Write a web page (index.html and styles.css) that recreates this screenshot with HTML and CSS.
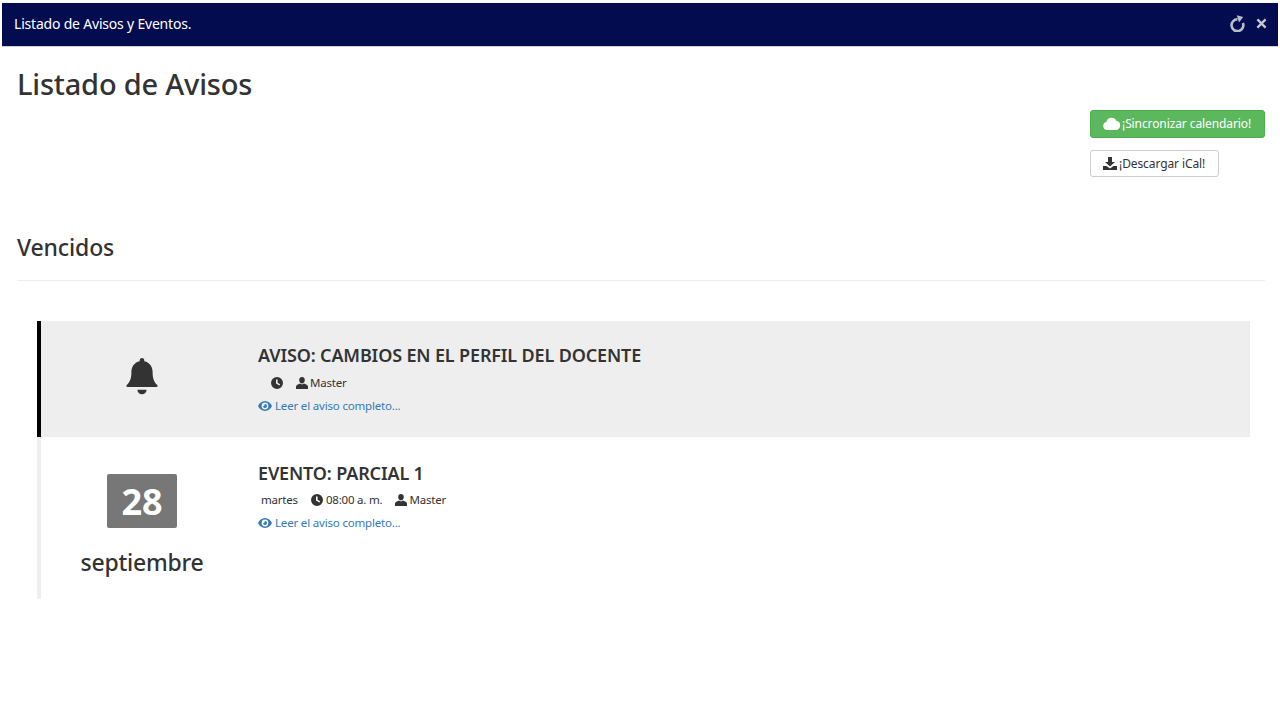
FILE: index.html
```html
<!DOCTYPE html>
<html lang="es">
<head>
<meta charset="utf-8">
<title>Listado de Avisos y Eventos.</title>
<link rel="stylesheet" href="styles.css">
</head>
<body>
<header class="bar">
  <span class="bar-title">Listado de Avisos y Eventos.</span>
  <span class="bar-tools">
    <svg class="tool-refresh" viewBox="0 0 15 17"><path class="refresh-arc" d="M7.500 4.300A5.900 5.900 0 1 0 12.900 8"/><path class="refresh-head" d="M6.800.2l6.400 1.800L9 7.600z"/></svg>
    <svg class="tool-close" viewBox="0 0 12 12"><path d="M2.400.6 6 4.200 9.600.6l1.800 1.800L7.800 6l3.600 3.600-1.800 1.800L6 7.800l-3.600 3.600-1.800-1.800L4.200 6 .6 2.400z"/></svg>
  </span>
</header>
<main class="page">
  <h1 class="page-title">Listado de Avisos</h1>
  <div class="actions">
    <a class="btn btn-green">
      <svg class="ico-cloud" viewBox="0 0 18 13"><path d="M4 13a4 4 0 0 1-.6-7.900A5.200 5.200 0 0 1 13.300 3.800 4.700 4.700 0 0 1 13.500 13z"/></svg>¡Sincronizar calendario!
    </a>
    <a class="btn btn-white">
      <svg class="ico-dl" viewBox="0 0 14 13"><path d="M5 0h4v5h3L7 9.500 2 5h3zM0 9h3.500L7 11.500 10.500 9H14v4H0z"/></svg>¡Descargar iCal!
    </a>
  </div>
  <h2 class="section-title">Vencidos</h2>
  <hr class="rule">
  <ul class="feed">
    <li class="item item-active">
      <div class="item-side">
        <svg class="ico-bell" viewBox="0 0 32 36.500"><path d="M16 0c1.400 0 2.300 1 2.300 2.400v.8C24 4.400 26.600 9 26.600 14c0 6 1.200 9.800 4.600 13 .8.800.5 2-.7 2H1.500c-1.200 0-1.500-1.200-.7-2C4.200 23.800 5.400 20 5.400 14 5.400 9 8 4.400 13.700 3.200v-.8C13.700 1 14.600 0 16 0zM11.400 31.700h9.200a4.600 4.600 0 0 1-9.200 0z"/></svg>
      </div>
      <div class="item-body">
        <h3 class="item-title">AVISO: CAMBIOS EN EL PERFIL DEL DOCENTE</h3>
        <p class="meta meta-indent">
          <span class="meta-part"><svg class="ico" viewBox="0 0 12 12"><path d="M6 0a6 6 0 1 1 0 12A6 6 0 0 1 6 0zM5 2.500v4.100l3.400 1.900.8-1.300L6.600 5.700V2.500z"/></svg></span>
          <span class="meta-part"><svg class="ico ico-user" viewBox="0 0 12 12"><path d="M6 0c1.700 0 2.800 1.300 2.800 3.100S7.700 6.500 6 6.500 3.200 4.900 3.200 3.100 4.300 0 6 0zM0 12V9.800c0-1.300 1-2 2.300-2.500L4 6.600c.6.500 1.200.8 2 .8s1.400-.3 2-.8l1.700.7c1.300.5 2.300 1.200 2.300 2.500V12z"/></svg>Master</span>
        </p>
        <a class="more"><svg class="ico-eye" viewBox="0 0 14 10"><path d="M7 0c3.200 0 5.700 2.200 7 5-1.300 2.800-3.800 5-7 5S1.300 7.800 0 5c1.300-2.800 3.800-5 7-5zm0 1.600a3.400 3.400 0 1 0 0 6.800 3.400 3.400 0 0 0 0-6.800zM7 3a2 2 0 1 1-2 2c.6.400 1.500 0 1.500-.7C6.500 3.800 6.500 3.300 7 3z" fill-rule="evenodd"/></svg>Leer el aviso completo...</a>
      </div>
    </li>
    <li class="item">
      <div class="item-side">
        <div class="day">28</div>
        <div class="month">septiembre</div>
      </div>
      <div class="item-body item-body-top">
        <h3 class="item-title">EVENTO: PARCIAL 1</h3>
        <p class="meta">
          <span class="meta-part meta-day">martes</span>
          <span class="meta-part"><svg class="ico" viewBox="0 0 12 12"><path d="M6 0a6 6 0 1 1 0 12A6 6 0 0 1 6 0zM5 2.500v4.100l3.400 1.900.8-1.300L6.600 5.700V2.500z"/></svg>08:00 a. m.</span>
          <span class="meta-part"><svg class="ico ico-user" viewBox="0 0 12 12"><path d="M6 0c1.700 0 2.800 1.300 2.800 3.100S7.700 6.500 6 6.500 3.200 4.900 3.200 3.100 4.300 0 6 0zM0 12V9.800c0-1.300 1-2 2.300-2.500L4 6.600c.6.500 1.200.8 2 .8s1.400-.3 2-.8l1.700.7c1.300.5 2.300 1.200 2.300 2.500V12z"/></svg>Master</span>
        </p>
        <a class="more"><svg class="ico-eye" viewBox="0 0 14 10"><path d="M7 0c3.200 0 5.700 2.200 7 5-1.300 2.800-3.800 5-7 5S1.300 7.800 0 5c1.300-2.800 3.800-5 7-5zm0 1.600a3.400 3.400 0 1 0 0 6.800 3.400 3.400 0 0 0 0-6.800zM7 3a2 2 0 1 1-2 2c.6.400 1.500 0 1.500-.7C6.500 3.800 6.500 3.300 7 3z" fill-rule="evenodd"/></svg>Leer el aviso completo...</a>
      </div>
    </li>
  </ul>
</main>
</body>
</html>
```
FILE: styles.css
```css
* { box-sizing: border-box; }
html, body { margin: 0; padding: 0; background: #fff; }
body {
  font-family: "Noto Sans", "Open Sans", sans-serif;
  color: #333;
  padding-top: 3px;
  height: 720px;
  overflow: hidden;
}
.bar {
  margin: 0 2px;
  height: 44px;
  background: #020c4f;
  border-bottom: 1px solid #d0d0d0;
  display: flex;
  align-items: center;
  justify-content: space-between;
  padding: 0 11px 0 12px;
  color: #fff;
}
.bar-title { font-size: 14px; letter-spacing: -0.2px; margin-top: -2px; }
.bar-tools { display: flex; align-items: center; gap: 11px; margin-top: -3px; }
.tool-refresh { width: 15px; height: 17px; }
.refresh-arc { fill: none; stroke: #b9bccb; stroke-width: 2.6; }
.refresh-head { fill: #b9bccb; }
.tool-close { width: 11px; height: 11px; fill: #c4c7d3; }
.page { padding: 0 15px 0 17px; }
.page-title {
  margin: 18px 0 0;
  font-size: 29px;
  line-height: 38px;
  font-weight: 500;
  letter-spacing: -0.2px;
}
.actions {
  margin-top: 7px;
  margin-left: 1073px;
  display: flex;
  flex-direction: column;
  align-items: flex-start;
  gap: 12px;
}
.btn {
  display: flex;
  align-items: center;
  font-size: 12px;
  letter-spacing: -0.1px;
  padding: 0 12px;
  border-radius: 3px;
  white-space: nowrap;
}
.btn-green { height: 28px; width: 175px; padding-bottom: 2px; background: #5cb85c; border: 1px solid #4cae4c; color: #fff; }
.btn-white { height: 27px; width: 129px; background: #fff; border: 1px solid #ccc; color: #333; }
.ico-cloud { width: 18px; height: 13px; fill: #fff; margin-right: 1px; flex: none; }
.ico-dl { width: 14px; height: 13px; fill: #333; margin-right: 2px; flex: none; }
.section-title {
  margin: 55px 0 0;
  font-size: 23px;
  line-height: 30px;
  font-weight: 500;
  letter-spacing: -0.15px;
}
.rule { margin: 18px 0 0 0; border: 0; border-top: 1px solid #eee; }
.feed { list-style: none; margin: 40px 15px 0 20px; padding: 0; }
.item { display: flex; border-left: 4px solid #eee; min-height: 162px; }
.item-active { background: #eee; border-left-color: #000; min-height: 116px; align-items: center; }
.item-side {
  width: 202px;
  flex: none;
  display: flex;
  flex-direction: column;
  align-items: center;
}
.item-body { padding-left: 15px; }
.item-body-top { padding-top: 24px; }
.item-active .item-body { padding-top: 0; margin-top: -2px; }
.ico-bell { width: 32px; height: 36.5px; fill: #333; margin-top: -5px; }
.item-title {
  margin: 0;
  font-size: 18px;
  line-height: 24px;
  font-weight: 600;
  letter-spacing: -0.15px;
}
.meta {
  margin: 7px 0 0;
  font-size: 11.5px;
  line-height: 16px;
  display: flex;
  gap: 13px;
  letter-spacing: -0.2px;
}
.meta-indent { margin-top: 8px; padding-left: 13px; gap: 10px; }
.meta-day { margin-left: 3px; }
.meta-part { display: inline-flex; align-items: center; }
.ico { width: 12px; height: 12px; fill: #333; margin-right: 3px; flex: none; }
.ico-user { margin-right: 2px; }
.more {
  display: flex;
  align-items: center;
  margin-top: 7px;
  font-size: 11.5px;
  line-height: 16px;
  color: #337ab7;
  letter-spacing: -0.18px;
}
.ico-eye { width: 14px; height: 10px; fill: #337ab7; margin-right: 3px; flex: none; }
.day {
  margin-top: 37px;
  width: 70px;
  height: 54px;
  background: #777;
  border-radius: 2px;
  color: #fff;
  font-size: 36px;
  font-weight: 700;
  line-height: 56px;
  text-align: center;
}
.month {
  margin-top: 18px;
  font-size: 23px;
  line-height: 32px;
  font-weight: 500;
  letter-spacing: -0.25px;
}
```
